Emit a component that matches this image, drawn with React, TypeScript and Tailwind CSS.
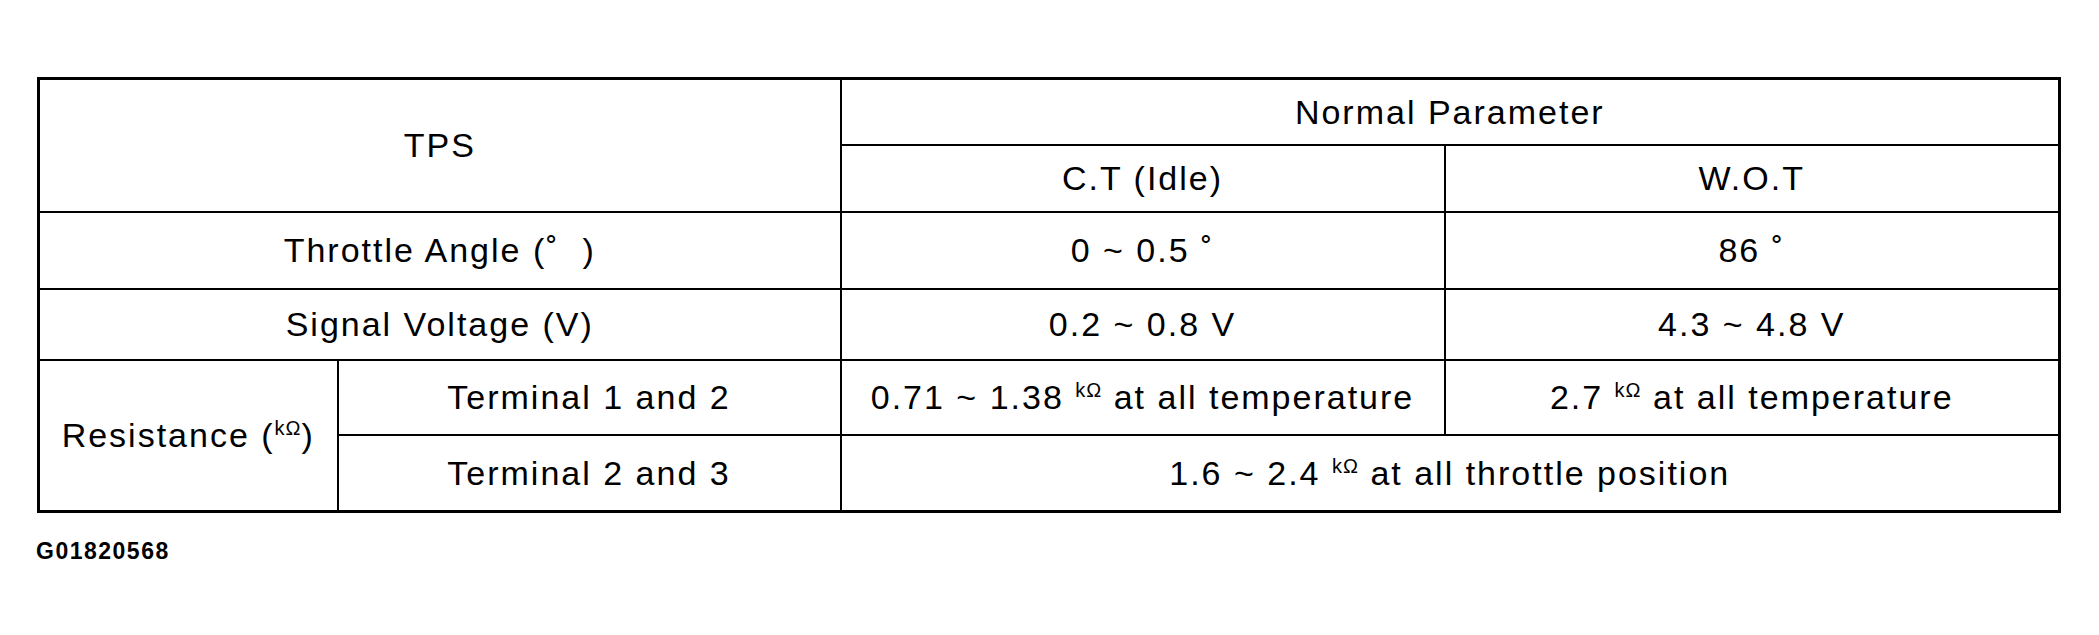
import React from 'react';

// small raised unit, as in the printed table
const Unit = () => <span className="align-super text-[20px] tracking-[1px]">kΩ</span>;

const cell = 'border-2 border-black text-center align-middle';

export default function App() {
  return (
    <div className="min-h-screen bg-white pt-[77px] font-['Liberation_Sans',Arial,sans-serif] text-black">
      <table className="ml-[37px] w-[2023px] table-fixed border-collapse border-[3px] border-black text-[34px] leading-none tracking-[2px]">
        <colgroup>
          <col className="w-[299px]" />
          <col className="w-[503px]" />
          <col className="w-[604px]" />
          <col className="w-[615px]" />
        </colgroup>
        <tbody>
          <tr className="h-[66px]">
            <td rowSpan={2} colSpan={2} className={cell}>TPS</td>
            <td colSpan={2} className={cell}>Normal Parameter</td>
          </tr>
          <tr className="h-[67px]">
            <td className={cell}>C.T (Idle)</td>
            <td className={cell}>W.O.T</td>
          </tr>
          <tr className="h-[77px]">
            <td colSpan={2} className={`${cell} whitespace-pre`}>Throttle Angle (˚  )</td>
            <td className={`${cell} whitespace-pre`}>0 ~ 0.5 ˚</td>
            <td className={`${cell} whitespace-pre`}>86 ˚</td>
          </tr>
          <tr className="h-[71px]">
            <td colSpan={2} className={cell}>Signal Voltage (V)</td>
            <td className={cell}>0.2 ~ 0.8 V</td>
            <td className={cell}>4.3 ~ 4.8 V</td>
          </tr>
          <tr className="h-[75px]">
            <td rowSpan={2} className={cell}>
              Resistance (<Unit />)
            </td>
            <td className={cell}>Terminal 1 and 2</td>
            <td className={cell}>
              0.71 ~ 1.38 <Unit /> at all temperature
            </td>
            <td className={cell}>
              2.7 <Unit /> at all temperature
            </td>
          </tr>
          <tr className="h-[77px]">
            <td className={cell}>Terminal 2 and 3</td>
            <td colSpan={2} className={cell}>
              1.6 ~ 2.4 <Unit /> at all throttle position
            </td>
          </tr>
        </tbody>
      </table>
      <div className="ml-[36px] mt-[27px] text-[23px] font-bold leading-[23px] tracking-[1.5px]">G01820568</div>
    </div>
  );
}
